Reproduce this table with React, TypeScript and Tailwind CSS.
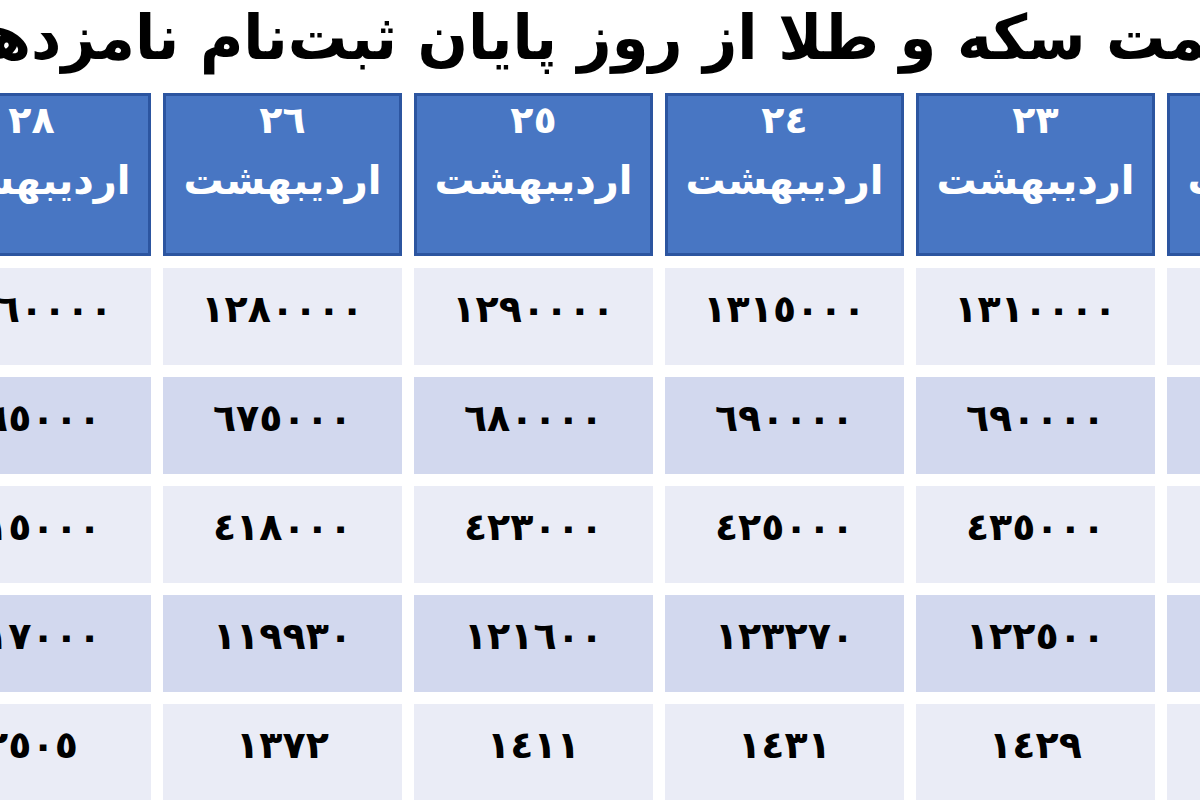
const font = { fontFamily: '"DejaVu Sans", "Noto Sans", sans-serif' };

const days = [
  { day: '٢٢', values: ['١٣٠٥٠٠٠', '٦٩٥٠٠٠', '٤٤٠٠٠٠', '١٢٢١٠٠', '١٤٣٥'] },
  { day: '٢٣', values: ['١٣١٠٠٠٠', '٦٩٠٠٠٠', '٤٣٥٠٠٠', '١٢٢٥٠٠', '١٤٢٩'] },
  { day: '٢٤', values: ['١٣١٥٠٠٠', '٦٩٠٠٠٠', '٤٢٥٠٠٠', '١٢٣٢٧٠', '١٤٣١'] },
  { day: '٢٥', values: ['١٢٩٠٠٠٠', '٦٨٠٠٠٠', '٤٢٣٠٠٠', '١٢١٦٠٠', '١٤١١'] },
  { day: '٢٦', values: ['١٢٨٠٠٠٠', '٦٧٥٠٠٠', '٤١٨٠٠٠', '١١٩٩٣٠', '١٣٧٢'] },
  { day: '٢٨', values: ['١٢٦٠٠٠٠', '٦٦٥٠٠٠', '٤١٥٠٠٠', '١١٧٠٠٠', '٢٥٠٥'] },
];

export default function App() {
  return (
    <div dir="rtl" className="w-[1200px] h-[800px] overflow-hidden bg-white text-black" style={font}>
      {/* title, cropped on both sides */}
      <div className="h-[93px] flex justify-center overflow-hidden">
        <h1 className="shrink-0 whitespace-nowrap text-[62px] font-bold leading-[76px] tracking-[-1px] scale-x-[0.955] translate-x-[20px]">
          قیمت سکه و طلا از روز پایان ثبت‌نام نامزدها
        </h1>
      </div>

      <div className="mr-[-206px] w-max grid grid-flow-col grid-cols-[repeat(6,239px)] grid-rows-[163px_repeat(5,97px)] gap-[12px]">
        {days.map((d) => (
          <div key={d.day} className="contents">
            <div className="bg-[#4876c3] border-[3px] border-[#2c55a0] flex flex-col items-center text-white font-bold">
              <span className="text-[38px] leading-[48px]">{d.day}</span>
              <span className="text-[40px] leading-[72px]">اردیبهشت</span>
            </div>
            {d.values.map((v, i) => (
              <div
                key={i}
                className={
                  'flex items-center justify-center pb-[14px] text-[38px] font-bold tracking-[3px] ' +
                  (i % 2 === 1 ? 'bg-[#d2d8ee]' : 'bg-[#eaecf6]')
                }
              >
                {v}
              </div>
            ))}
          </div>
        ))}
      </div>
    </div>
  );
}
